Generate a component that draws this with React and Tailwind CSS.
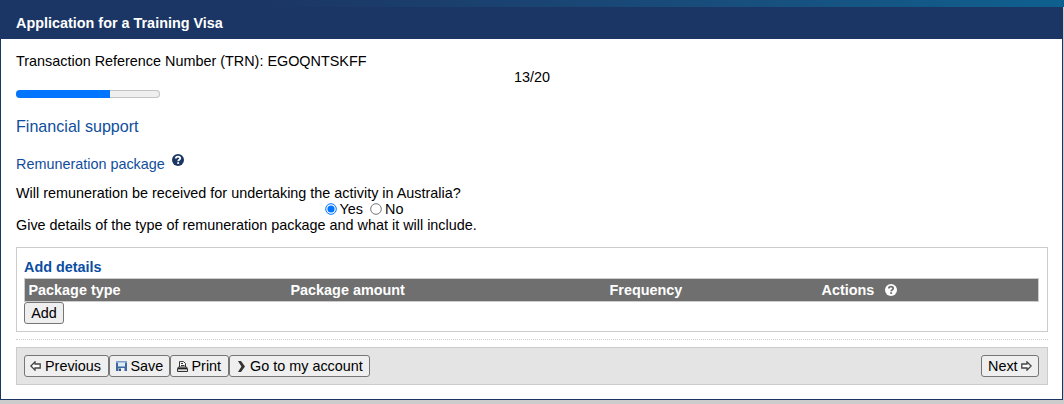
import { useState } from 'react';

const buttonClass =
  'flex h-[22px] items-center rounded-[3px] border border-[#767676] bg-[#efefef] text-[14.4px] leading-4 whitespace-nowrap text-black';

function HelpIcon({ color, mark, className }) {
  return (
    <svg className={className} width="12" height="12" viewBox="0 0 12 12">
      <circle cx="6" cy="6" r="6" fill={color} />
      <path d="M3.8 4.5C3.9 2 8.2 2.2 8.2 4.4C8.2 5.8 6.2 5.7 6.2 7.2" fill="none" stroke={mark} strokeWidth="1.8" />
      <rect x="5.2" y="8.2" width="1.9" height="1.7" fill={mark} />
    </svg>
  );
}

function ArrowIcon({ flip }) {
  return (
    <svg className={flip ? '-scale-x-100' : ''} width="11" height="10" viewBox="0 0 11 10">
      <path d="M0.9 5L5 0.9V3H10.2V7H5V9.1Z" fill="#fff" stroke="#444" strokeWidth="1.3" />
    </svg>
  );
}

function SaveIcon() {
  return (
    <svg width="11" height="10" viewBox="0 0 11 10">
      <path d="M0 0H11V10H0Z" fill="#3f689f" />
      <path d="M0 0H11V2H0Z" fill="#7f9fcb" />
      <path d="M2 1.5H9V5.5H2Z" fill="#dcebf7" />
      <path d="M2.5 7H8.5V10H2.5Z" fill="#eef0f3" />
      <path d="M3 7.5H5V10H3Z" fill="#34537f" />
    </svg>
  );
}

function PrintIcon() {
  return (
    <svg width="11" height="11" viewBox="0 0 11 11">
      <path d="M2.5 6V0.6H6.5L8.5 2.5V6" fill="#fff" stroke="#333" />
      <path d="M4 2.5H6M4 4.5H7.5" stroke="#333" />
      <path d="M1.5 6L0.5 7.5V10.5H10.5V7.5L9.5 6Z" fill="#ddd" stroke="#333" />
      <path d="M1 7.5H10" stroke="#222" strokeWidth="1.6" />
    </svg>
  );
}

function ChevronIcon() {
  return (
    <svg width="7" height="11" viewBox="0 0 7 11">
      <path d="M0 0H3L7 5.5L3 11H0L3.4 5.5Z" fill="#333" />
    </svg>
  );
}

function Radio({ label, checked, onSelect }) {
  return (
    <label className="flex items-center">
      <input type="radio" name="remuneration" className="sr-only" checked={checked} onChange={onSelect} />
      <svg className="mr-[3px]" width="12" height="12" viewBox="0 0 12 12">
        <circle cx="6" cy="6" r="5.3" fill="#fff" stroke={checked ? '#0075ff' : '#767676'} strokeWidth="1" />
        {checked && <circle cx="6" cy="6" r="3.6" fill="#0075ff" />}
      </svg>
      {label}
    </label>
  );
}

export default function App() {
  const [received, setReceived] = useState(true);
  const page = 13;
  const total = 20;

  return (
    <div className="h-[404px] w-full overflow-hidden bg-[#ccc] font-['Liberation_Sans',Arial,sans-serif] text-[14.4px] leading-4 text-black">
      <div className="h-[7px] bg-linear-to-r from-[#1b3664] from-25% to-[#0e608f]" />
      <div className="mr-px flex h-[393px] flex-col border-x border-b border-[#1b3664] bg-white">
        <h1 className="h-8 shrink-0 bg-[#1b3664] pl-[15px] text-[14.4px] leading-8 font-bold text-white">
          Application for a Training Visa
        </h1>

        <main className="pt-[14px] pr-[14px] pl-[15px]">
          <p>Transaction Reference Number (TRN): EGOQNTSKFF</p>
          <p className="text-center">{page}/{total}</p>
          <div className="mt-[5px] h-2 w-36 overflow-hidden rounded-full bg-[#efefef] inset-ring inset-ring-[#c3c3c3]">
            <div className="h-full bg-[#0075ff]" style={{ width: `${(page / total) * 100}%` }} />
          </div>

          <h2 className="mt-5 text-[16.1px] leading-4 text-[#104e9b]">Financial support</h2>
          <h3 className="mt-[22px] flex text-[14.4px] leading-4 text-[#104e9b]">
            Remuneration package
            <HelpIcon className="-mt-0.5 ml-[7px]" color="#1b3664" mark="#fff" />
          </h3>

          <p className="mt-[13px]">Will remuneration be received for undertaking the activity in Australia?</p>
          <div className="flex gap-[7px] pl-[308.5px]">
            <Radio label="Yes" checked={received} onSelect={() => setReceived(true)} />
            <Radio label="No" checked={!received} onSelect={() => setReceived(false)} />
          </div>
          <p>Give details of the type of remuneration package and what it will include.</p>

          <section className="mt-[14px] h-[85px] border border-[#ccc] px-[7px] pt-[11px]">
            <h4 className="font-bold text-[#0b4ea2]">Add details</h4>
            <div className="mt-[3px] mr-px grid h-6 grid-cols-[262px_319px_212px_1fr] items-center border border-[#ccc] bg-[#6f6f6f] pl-[3.5px] font-bold text-white">
              <span>Package type</span>
              <span>Package amount</span>
              <span>Frequency</span>
              <span className="flex items-center gap-[11px]">
                Actions
                <HelpIcon color="#fff" mark="#6f6f6f" />
              </span>
            </div>
            <button className={`${buttonClass} w-10 justify-center`}>Add</button>
          </section>

          <div className="mt-[7px] border-t border-dotted border-[#ccc]" />

          <footer className="mt-[7px] flex h-[38px] items-center border border-[#ccc] bg-[#e4e4e4] pr-2 pl-[7px]">
            <button className={`${buttonClass} w-[85px] gap-1 pl-[5px]`}><ArrowIcon />Previous</button>
            <button className={`${buttonClass} w-[61px] gap-[3.5px] pl-1.5`}><SaveIcon />Save</button>
            <button className={`${buttonClass} w-[59px] gap-[3.5px] pl-1.5`}><PrintIcon />Print</button>
            <button className={`${buttonClass} w-[141px] gap-[5px] pl-2`}><ChevronIcon />Go to my account</button>
            <button className={`${buttonClass} ml-auto w-[58px] gap-[3px] pl-1.5`}>Next<ArrowIcon flip /></button>
          </footer>
        </main>
      </div>
    </div>
  );
}
